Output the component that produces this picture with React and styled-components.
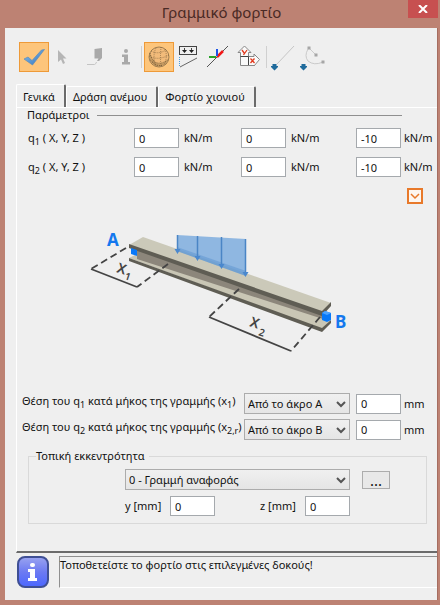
import React, {useState} from 'react';
import styled, {createGlobalStyle, css} from 'styled-components';

const GlobalStyle = createGlobalStyle`
  * {
    box-sizing: border-box;
  }
  body {
    margin: 0;
    background: #bd8273;
    color: #111;
    font: 11px/16px "Noto Sans", "Open Sans", sans-serif;
  }
  button, input, select {
    font: inherit;
    color: inherit;
  }
`;

const Window = styled.div`
  display: flex;
  flex-direction: column;
  min-height: 100vh;
  padding: 0 2px 5px 5px;
  background: #bd8273;
`;
const TitleBar = styled.header`
  display: grid;
  grid-template-columns: 30px 1fr 30px;
  align-items: start;
  height: 28px;
`;
const Title = styled.h1`
  grid-column: 2;
  margin: 0;
  font-size: 15px;
  line-height: 24px;
  font-weight: 400;
  text-align: center;
  color: #4a2a25;
`;
const CloseButton = styled.button`
  display: flex;
  align-items: center;
  justify-content: center;
  height: 18px;
  padding: 0;
  border: 0;
  background: #c75050;
`;
const Client = styled.main`
  flex: 1;
  display: flex;
  flex-direction: column;
  padding: 14px 0 12px 11px;
  background: #efefef;
  border: solid #a56d60;
  border-width: 0 1px 0 0;
`;

const Toolbar = styled.div`
  display: flex;
  align-items: center;
  height: 30px;
  margin-left: 3px;
`;
const ToolButton = styled.button`
  display: flex;
  align-items: center;
  justify-content: center;
  width: ${p => p.$width || 30}px;
  height: 30px;
  padding: 0;
  border: 1px solid transparent;
  background: none;
  ${p => p.$active && css`
    border-color: #ee9a38;
    background: #fdc57b;
  `}
`;
const Separator = styled.span`
  width: 1px;
  height: 22px;
  margin: 0 2px;
  background: #d0d0d0;
`;

const Tabs = styled.div`
  display: flex;
  align-items: flex-end;
  height: 23px;
  margin-top: 12px;
`;
const Tab = styled.button`
  height: ${p => (p.$active ? 24 : 21)}px;
  margin-bottom: ${p => (p.$active ? -1 : 0)}px;
  padding: 0 9px 0 6px;
  border: solid #fff;
  border-width: 1px 0 0 1px;
  border-right: 2px solid #6b6b6b;
  border-radius: 2px 2px 0 0;
  background: #efefef;
  white-space: nowrap;
`;
const Panel = styled.section`
  flex: 1;
  padding: 0 3px 27px 5px;
  border: solid #fff;
  border-width: 1px 0 0 1px;
  border-bottom: 2px solid #6b6b6b;
`;

const GroupTitle = styled.h2`
  display: flex;
  align-items: center;
  gap: 8px;
  margin: 0 32px 6px 5px;
  font-size: 11px;
  line-height: 14px;
  font-weight: 400;

  &::after {
    content: '';
    flex: 1;
    height: 1px;
    background: #8f8f8f;
  }
`;
const LoadGrid = styled.div`
  display: grid;
  grid-template-columns: 106fr 107fr 115fr 78fr;
  align-items: center;
  row-gap: 9px;
  margin-left: 6px;
`;
const Label = styled.label`
  white-space: nowrap;

  sub {
    font-size: 9px;
    line-height: 1px;
    vertical-align: -3px;
  }
`;
const Field = styled.div`
  display: flex;
  align-items: center;
  gap: ${p => (p.$tight ? 3 : 5)}px;
`;
const NumberInput = styled.input`
  width: 45px;
  height: 20px;
  padding: 0 4px;
  border: 1px solid #a5a9ad;
  border-radius: 0;
  background: #fff;
`;
const ExpandRow = styled.div`
  display: flex;
  justify-content: flex-end;
  margin: 11px 11px 0 0;
`;
const ExpandButton = styled.button`
  display: flex;
  align-items: center;
  justify-content: center;
  width: 16px;
  height: 16px;
  padding: 0;
  border: 2px solid #e8792a;
  background: #fdf6ef;
`;
const Diagram = styled.svg`
  display: block;
  width: 268px;
  height: 135px;
  margin: 20px auto 34px 62px;
`;
const PositionGrid = styled.div`
  display: grid;
  grid-template-columns: minmax(0, 1fr) 106px 78px;
  column-gap: 6px;
  row-gap: 5px;
`;
const SelectBox = styled.span`
  display: grid;
  align-items: center;

  & > * {
    grid-area: 1 / 1;
  }
  & > svg {
    justify-self: end;
    margin-right: 4px;
    pointer-events: none;
  }
`;
const SelectInput = styled.select`
  appearance: none;
  width: 100%;
  height: 21px;
  padding: 0 20px 0 3px;
  border: 1px solid #acacac;
  border-radius: 0;
  background: linear-gradient(#f0f0f0, #e5e5e5);
`;
const Eccentricity = styled.fieldset`
  display: grid;
  grid-template-columns: 225px 28px;
  column-gap: 12px;
  row-gap: 6px;
  margin: 8px 8px 0 6px;
  padding: 5px 36px 7px 96px;
  border: 1px solid #d9d9d9;
`;
const Legend = styled.legend`
  margin-left: -89px;
  padding: 0 4px 0 0;
`;
const BrowseButton = styled.button`
  align-self: center;
  height: 18px;
  padding: 0;
  border: 1px solid #acacac;
  background: #e8e8e8;
  font-size: 15px;
  line-height: 10px;
`;
const Offsets = styled.div`
  display: flex;
  justify-content: space-between;
`;
const OffsetField = styled(Field)`
  width: 90px;
  justify-content: space-between;
`;

const StatusBar = styled.footer`
  display: flex;
  gap: 10px;
  margin: 3px 0 0 1px;
`;
const StatusText = styled.p`
  flex: 1;
  min-height: 32px;
  margin: 0;
  border: solid #8f8f8f;
  border-width: 1px 0 0 1px;
  border-bottom: 1px solid #fff;
`;

const CheckIcon = () => (
  <svg width="24" height="24" viewBox="0 0 24 24">
    <defs>
      <linearGradient id="check" x1="0" y1="0" x2="1" y2="1">
        <stop offset="0" stopColor="#8fc4f2" />
        <stop offset="1" stopColor="#2c6fb8" />
      </linearGradient>
    </defs>
    <path d="M2 14 L6 12 L10 15.500 L19.500 5 L22.500 4.500 L10.500 20 Z" fill="url(#check)" stroke="#5b8db8" strokeWidth=".7" />
  </svg>
);
const CursorIcon = () => (
  <svg width="10" height="15" viewBox="0 0 10 15">
    <path d="M0 0 V12 L3 9.500 L5 14 L7 13 L5 8.500 H8.500 Z" fill="#b5b5b5" />
  </svg>
);
const PenIcon = () => (
  <svg width="16" height="20" viewBox="0 0 16 20">
    <path d="M7.500 2 L15 1 V11 L12 14 H10 L11.500 11.500 H7.500 Z" fill="#a9a9a9" />
    <path d="M0 17.500 H7.500 Q9 17 9.500 15" fill="none" stroke="#c4c4c4" />
  </svg>
);
const InfoIcon = () => (
  <svg width="18" height="18" viewBox="0 0 18 18" fill="#a9a9a9">
    <rect x="7" y="1" width="4" height="4" rx="2" />
    <path d="M5 6.500 H11 V14 H13 V16.500 H5 V14 H7 V9 H5 Z" />
  </svg>
);
const SphereIcon = () => (
  <svg width="24" height="24" viewBox="0 0 24 24" fill="none">
    <circle cx="12" cy="12" r="10" fill="#f2bb7a" stroke="#8a6d45" strokeWidth=".8" />
    <path d="M3 8 Q1 14 5 18 Q9 23 15 21 Q20 19 21 14 Q16 19 11 18 Q5 16 3 8 Z" fill="#a98350" fillOpacity=".6" />
    <g stroke="#6f5836" strokeWidth=".6" strokeDasharray="1 1">
      <path d="M4 6 Q11 10 19 5 M2 11 Q11 16 22 10 M3 15 Q12 21 21 15 M9 3 Q5 11 9 21 M14 2 Q13 12 14 22 M18 4 Q21 12 17 20" />
      <path d="M5 17 Q10 22 16 20 M3 8 Q4 13 7 16" strokeWidth="1" />
    </g>
  </svg>
);
const LoadIcon = () => (
  <svg width="20" height="24" viewBox="0 0 20 24" fill="none" stroke="#444">
    <path d="M1.500 1 V10 M18.500 1 V10 M1 1.500 H19 M1 9.500 H19" />
    <path d="M6.500 3 V7 M13.500 3 V7" />
    <path d="M4 5 H9 L6.500 8 Z M11 5 H16 L13.500 8 Z" fill="#222" stroke="none" />
    <path d="M1.500 12 V22" stroke="#4b9bd8" strokeDasharray="1 1" />
    <path d="M2 22 L19 13" stroke="#666" />
  </svg>
);
const AxesIcon = () => (
  <svg width="24" height="24" viewBox="0 0 24 24" fill="none">
    <path d="M1 22 L22 1" stroke="#555" />
    <path d="M11 12 L17 6" stroke="#f01818" strokeWidth="2.500" />
    <path d="M11 4 V11" stroke="#1d55e6" strokeWidth="2" />
    <path d="M3 12 H10" stroke="#28a428" strokeWidth="2" />
  </svg>
);
const PlaneIcon = () => (
  <svg width="24" height="24" viewBox="0 0 24 24" fill="#fafafa" stroke="#888">
    <path d="M3.500 20.500 V7.500 H1 L7.500 1 L14 7.500 H11.500 V11.500 H17 V9 L22.500 14.500 L17 21 V20.500 Z" />
    <path d="M3.500 11.500 H11.500 V20" fill="none" stroke="#444" />
    <path d="M5 5 L7.500 8.500 M10 5 L6.500 10" fill="none" stroke="#e23a1e" strokeWidth="1.300" />
    <path d="M13.500 13.500 L17.500 18 M17.500 13.500 L13.500 18" stroke="#e23a1e" strokeWidth="1.300" />
  </svg>
);
const ArrowDown = () => (
  <path d="M2.500 21 H6.500 V23 H8 V24 L4.500 27.500 L1 24 V23 H2.500 Z" fill="#1f6b9c" />
);
const LineIcon = () => (
  <svg width="26" height="28" viewBox="0 0 26 28">
    <path d="M7 21 L24 3" stroke="#c6c6c6" />
    <ArrowDown />
  </svg>
);
const ArcIcon = () => (
  <svg width="28" height="28" viewBox="0 0 28 28">
    <path d="M9 6 Q5 13 9 18 Q15 23 24 19 M10 5 L17 12" fill="none" stroke="#cacaca" />
    <path d="M8.500 3.500 h3 v3 h-3 Z M15.500 10.500 h3 v3 h-3 Z M22.500 17.500 h3 v3 h-3 Z" fill="#a6a6a6" />
    <ArrowDown />
  </svg>
);
const ChevronIcon = ({color = '#555', width = 2}) => (
  <svg width="10" height="8" viewBox="0 0 10 8">
    <path d="M1 2 L5 6 L9 2" fill="none" stroke={color} strokeWidth={width} />
  </svg>
);
const StatusIcon = () => (
  <svg width="32" height="32" viewBox="0 0 32 32">
    <defs>
      <linearGradient id="status" x1="0" y1="0" x2="0" y2="1">
        <stop offset="0" stopColor="#9aa4f0" />
        <stop offset=".5" stopColor="#6c7af2" />
        <stop offset="1" stopColor="#4a66ff" />
      </linearGradient>
    </defs>
    <rect x="1" y="1" width="30" height="30" rx="7" fill="url(#status)" stroke="#3f4f94" strokeWidth="2" />
    <rect x="13" y="7" width="5" height="4" rx="2" fill="#fff" />
    <path d="M11 13 H18 V22 H20 V25 H11 V22 H13 V16 H11 Z" fill="#fff" />
  </svg>
);

const BeamDiagram = () => (
  <Diagram viewBox="84 225 268 135" role="img" fontFamily='"Noto Sans", sans-serif'>
    {/* bottom flange */}
    <path d="M129 259 L135 256 L331 322 L322 330 Z" fill="#c9c6b5" />
    <path d="M129 259 L322 329 L331 321 V324 L322 333 L129 262 Z" fill="#5f5d54" />
    {/* web */}
    <path d="M137 250 L323 314 V320 L137 260 Z" fill="#8c867b" />
    {/* top flange */}
    <path d="M129 246 L143 238 L331 304 L322 313 Z" fill="#cbc9b9" />
    <path d="M129 245 L322 312 L331 303 V307 L322 317 L129 249 Z" fill="#5f5d54" />
    {/* supports */}
    <path d="M131 249 L137 251 V257 L131 255 Z" fill="#0878f8" />
    <path d="M322 314 L325 312 L331 314 V321 L327 323 L322 321 Z" fill="#0878f8" />
    <path d="M322 314 L325 312 L331 314 L327 316 Z" fill="#4ba2ff" />
    {/* distributed load */}
    <path d="M177 236 L246 240 V277 L177 252 Z" fill="#6fa4dc" fillOpacity=".75" />
    <path d="M177 248 L246 272 V277 L177 252 Z" fill="#5b93cf" fillOpacity=".5" />
    <path d="M177.500 236 V251 M197.500 237 V259 M221.500 238 V268 M245.500 240 V276" stroke="#4a85c5" strokeWidth="1.500" />
    <path d="M174.500 250 h6 l-3 5 Z M194.500 257 h6 l-3 5 Z M218.500 265 h6 l-3 5 Z M242.500 273 h6 l-3 5 Z" fill="#4a88ce" />
    {/* dimension lines */}
    <g fill="none" stroke="#444" strokeWidth="1.800">
      <path d="M91 270 L137 288 M209 318 L291 352" />
      <path d="M126 249 L91 270 M168 265 L137 288 M239 290 L209 318 M320 318 L291 352" strokeDasharray="7 4" />
    </g>
    <g fill="#444" fontWeight="600">
      <text transform="translate(116 273) rotate(18)" fontSize="14">X</text>
      <text transform="translate(124 280) rotate(18)" fontSize="10">1</text>
      <text transform="translate(249 327) rotate(18)" fontSize="14">X</text>
      <text transform="translate(258 336) rotate(18)" fontSize="10">2</text>
    </g>
    <g fill="#1478ee" fontSize="17" fontWeight="700">
      <text x="107" y="247">A</text>
      <text x="335" y="329">B</text>
    </g>
  </Diagram>
);

const TABS = ['Γενικά', 'Δράση ανέμου', 'Φορτίο χιονιού'];
const AXES = ['X', 'Y', 'Z'];
const LOADS = [
  {index: 1, values: ['0', '0', '-10']},
  {index: 2, values: ['0', '0', '-10']},
];
const POSITIONS = [
  {index: 1, sub: '1', value: 'A'},
  {index: 2, sub: '2,r', value: 'B'},
];

const Select = ({children, ...props}) => (
  <SelectBox>
    <SelectInput {...props}>{children}</SelectInput>
    <ChevronIcon />
  </SelectBox>
);

const App = () => {
  const [tab, setTab] = useState(0);

  return (
    <Window>
      <GlobalStyle />
      <TitleBar>
        <Title>Γραμμικό φορτίο</Title>
        <CloseButton aria-label="Κλείσιμο">
          <svg width="10" height="8" viewBox="0 0 10 8">
            <path d="M1 0 L9 8 M9 0 L1 8" stroke="#fff" strokeWidth="2" />
          </svg>
        </CloseButton>
      </TitleBar>
      <Client>
        <Toolbar>
          <ToolButton $active aria-label="OK"><CheckIcon /></ToolButton>
          <ToolButton $width={28} aria-label="Επιλογή"><CursorIcon /></ToolButton>
          <ToolButton $width={36} aria-label="Ιδιότητες"><PenIcon /></ToolButton>
          <ToolButton $width={26} aria-label="Πληροφορίες"><InfoIcon /></ToolButton>
          <Separator />
          <ToolButton $active aria-label="Καθολικό"><SphereIcon /></ToolButton>
          <ToolButton $width={28} aria-label="Φορτίο"><LoadIcon /></ToolButton>
          <ToolButton $width={32} aria-label="Άξονες"><AxesIcon /></ToolButton>
          <ToolButton aria-label="Επίπεδο"><PlaneIcon /></ToolButton>
          <Separator />
          <ToolButton $width={28} aria-label="Γραμμή"><LineIcon /></ToolButton>
          <ToolButton $width={32} aria-label="Τόξο"><ArcIcon /></ToolButton>
        </Toolbar>

        <Tabs role="tablist">
          {TABS.map((name, i) => (
            <Tab key={name} role="tab" aria-selected={tab === i} $active={tab === i} onClick={() => setTab(i)}>
              {name}
            </Tab>
          ))}
        </Tabs>
        <Panel>
          <GroupTitle>Παράμετροι</GroupTitle>
          <LoadGrid>
            {LOADS.map(({index, values}) => (
              <React.Fragment key={index}>
                <Label htmlFor={`q${index}X`}>q<sub>{index}</sub> ( X, Y, Z )</Label>
                {values.map((value, i) => (
                  <Field key={AXES[i]} $tight={i === 2}>
                    <NumberInput id={`q${index}${AXES[i]}`} aria-label={`q${index} ${AXES[i]}`} defaultValue={value} />
                    <span>kN/m</span>
                  </Field>
                ))}
              </React.Fragment>
            ))}
          </LoadGrid>
          <ExpandRow>
            <ExpandButton aria-label="Περισσότερα"><ChevronIcon color="#e8792a" width={1.5} /></ExpandButton>
          </ExpandRow>

          <BeamDiagram />

          <PositionGrid>
            {POSITIONS.map(({index, sub, value}) => (
              <React.Fragment key={index}>
                <Label htmlFor={`from${index}`}>Θέση του q<sub>{index}</sub> κατά μήκος της γραμμής (x<sub>{sub}</sub>)</Label>
                <Select id={`from${index}`} defaultValue={value}>
                  <option value="A">Από το άκρο A</option>
                  <option value="B">Από το άκρο B</option>
                </Select>
                <Field $tight>
                  <NumberInput aria-label={`x${index}`} defaultValue="0" />
                  <span>mm</span>
                </Field>
              </React.Fragment>
            ))}
          </PositionGrid>

          <Eccentricity>
            <Legend>Τοπική εκκεντρότητα</Legend>
            <Select aria-label="Τοπική εκκεντρότητα" defaultValue="0">
              <option value="0">0 - Γραμμή αναφοράς</option>
            </Select>
            <BrowseButton>...</BrowseButton>
            <Offsets>
              <OffsetField>
                <label htmlFor="offsetY">y [mm]</label>
                <NumberInput id="offsetY" defaultValue="0" />
              </OffsetField>
              <OffsetField>
                <label htmlFor="offsetZ">z [mm]</label>
                <NumberInput id="offsetZ" defaultValue="0" />
              </OffsetField>
            </Offsets>
          </Eccentricity>
        </Panel>

        <StatusBar>
          <StatusIcon />
          <StatusText>Τοποθετείστε το φορτίο στις επιλεγμένες δοκούς!</StatusText>
        </StatusBar>
      </Client>
    </Window>
  );
};

export default App;
